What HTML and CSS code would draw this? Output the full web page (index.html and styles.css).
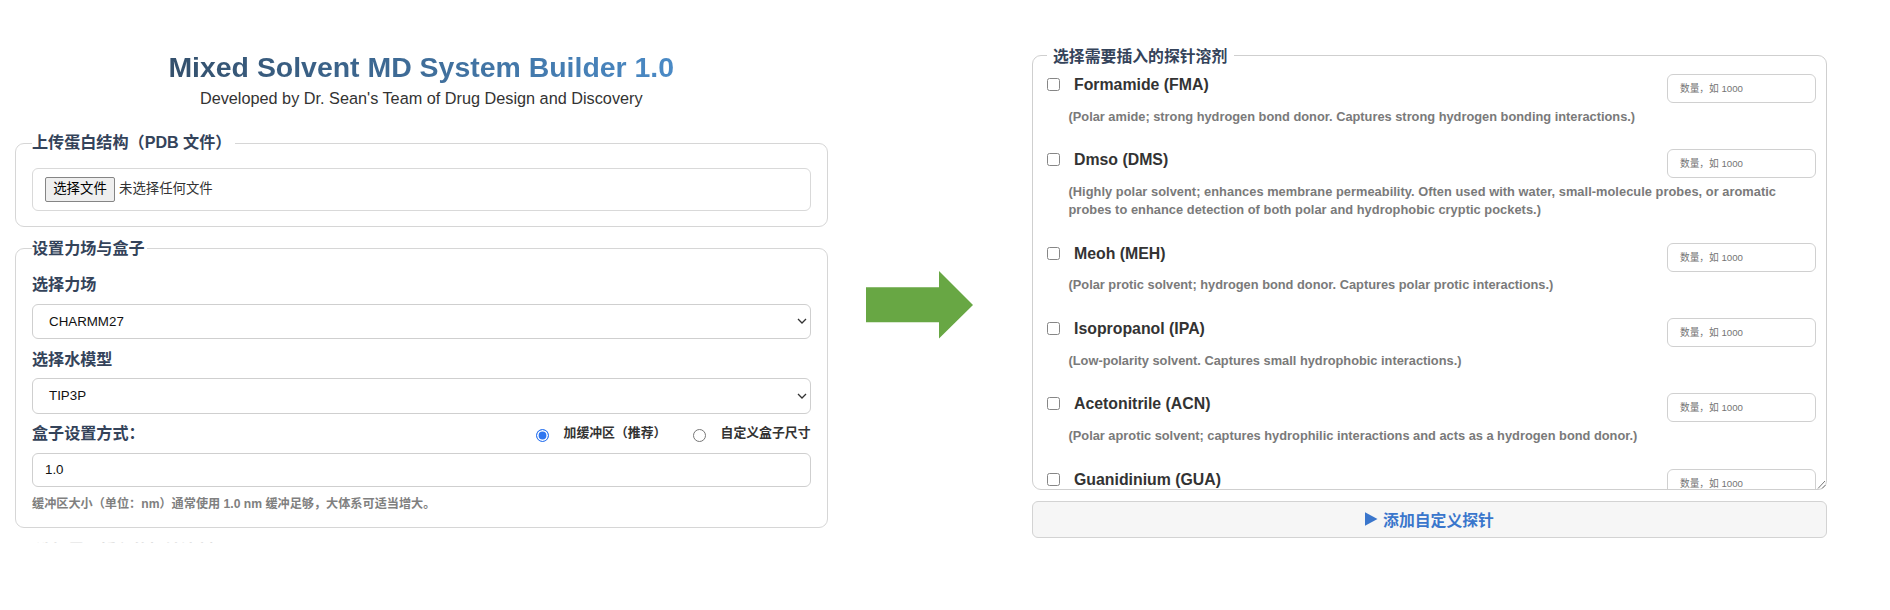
FILE: index.html
```html
<!DOCTYPE html>
<html lang="zh-CN">
<head>
<meta charset="utf-8">
<title>Mixed Solvent MD System Builder 1.0</title>
<link rel="stylesheet" href="styles.css">
</head>
<body>
<main class="page">
  <section class="setup">
    <header class="header">
      <h1 class="title"><span class="title-text">Mixed Solvent MD System Builder 1.0</span></h1>
      <p class="subtitle">Developed by Dr. Sean's Team of Drug Design and Discovery</p>
    </header>

    <div class="panel panel-upload">
      <h2 class="legend legend-upload">上传蛋白结构（PDB 文件）</h2>
      <div class="file-field">
        <button class="file-button" type="button">选择文件</button>
        <span class="file-name">未选择任何文件</span>
      </div>
    </div>

    <div class="panel panel-box">
      <h2 class="legend">设置力场与盒子</h2>
      <div class="label">选择力场</div>
      <div class="select"><span>CHARMM27</span><svg class="chevron" viewBox="0 0 10 6"><path d="M1 1l4 4 4-4"/></svg></div>
      <div class="label label-water">选择水模型</div>
      <div class="select select-water"><span>TIP3P</span><svg class="chevron" viewBox="0 0 10 6"><path d="M1 1l4 4 4-4"/></svg></div>
      <div class="mode">
        <div class="label">盒子设置方式：</div>
        <div class="options">
          <span class="radio radio-on"></span><span class="option option-first">加缓冲区（推荐）</span>
          <span class="radio"></span><span class="option">自定义盒子尺寸</span>
        </div>
      </div>
      <div class="input">1.0</div>
      <p class="hint">缓冲区大小（单位：nm）通常使用 1.0 nm 缓冲足够，大体系可适当增大。</p>
    </div>
    <div class="next-panel">选择需要插入的探针溶剂</div>
  </section>

  <svg class="arrow" viewBox="0 0 108 68"><path d="M0 16.3H73V0L107 34 73 67.6V51.3H0z"/></svg>

  <section class="probes">
    <div class="probe-panel">
      <h2 class="legend legend-probes">选择需要插入的探针溶剂</h2>
      <div class="probe-list">
        <div class="probe"><span class="check"></span><span class="name">Formamide (FMA)</span><span class="amount">数量，如 1000</span><p class="desc">(Polar amide; strong hydrogen bond donor. Captures strong hydrogen bonding interactions.)</p></div>
        <div class="probe"><span class="check"></span><span class="name">Dmso (DMS)</span><span class="amount">数量，如 1000</span><p class="desc desc-long">(Highly polar solvent; enhances membrane permeability. Often used with water, small-molecule probes, or aromatic<br>probes to enhance detection of both polar and hydrophobic cryptic pockets.)</p></div>
        <div class="probe"><span class="check"></span><span class="name">Meoh (MEH)</span><span class="amount">数量，如 1000</span><p class="desc">(Polar protic solvent; hydrogen bond donor. Captures polar protic interactions.)</p></div>
        <div class="probe"><span class="check"></span><span class="name">Isopropanol (IPA)</span><span class="amount">数量，如 1000</span><p class="desc">(Low-polarity solvent. Captures small hydrophobic interactions.)</p></div>
        <div class="probe"><span class="check"></span><span class="name">Acetonitrile (ACN)</span><span class="amount">数量，如 1000</span><p class="desc">(Polar aprotic solvent; captures hydrophilic interactions and acts as a hydrogen bond donor.)</p></div>
        <div class="probe"><span class="check"></span><span class="name">Guanidinium (GUA)</span><span class="amount">数量，如 1000</span></div>
      </div>
      <svg class="grip" viewBox="0 0 9 9"><path d="M1 8.5L8 1M5 8.5L8.5 5"/></svg>
    </div>
    <button class="add" type="button"><svg class="play" viewBox="0 0 13 14"><path d="M0 .3L12.5 7 0 13.7z"/></svg>添加自定义探针</button>
  </section>
</main>
</body>
</html>
```
FILE: styles.css
```css
* { box-sizing: border-box; margin: 0; padding: 0; }

body {
  width: 1890px;
  height: 610px;
  overflow: hidden;
  background: #fff;
  color: #333;
  font-family: "Liberation Sans", "Noto Sans CJK SC", sans-serif;
}

.page { display: flex; align-items: flex-start; height: 610px; padding-left: 15px; }

/* left column */
.setup { width: 812.5px; height: 543px; overflow: hidden; }
.header { height: 143px; padding-top: 50px; text-align: center; }
.title { font-size: 28.45px; line-height: 34px; font-weight: 700; white-space: nowrap; }
.title-text {
  background: linear-gradient(90deg, #34506c, #4a8ac6);
  -webkit-background-clip: text;
  background-clip: text;
  color: transparent;
}
.subtitle { font-size: 16.26px; line-height: 29px; }

.panel { border: 1px solid #d6d6d6; border-radius: 9px; padding: 0 16px; }
.panel-upload { height: 84px; margin-bottom: 21px; }
.panel-box { height: 280px; }

.legend {
  width: max-content;
  height: 24px;
  margin-top: -13px;
  padding-right: 2px;
  background: #fff;
  color: #34435a;
  font-size: 16.1px;
  line-height: 24px;
  font-weight: 600;
  white-space: nowrap;
}
.legend-upload { width: 203px; line-height: 23px; }

.file-field {
  display: flex;
  align-items: center;
  height: 43px;
  margin-top: 13px;
  padding: 0 0 1px 12px;
  border: 1px solid #d9d9d9;
  border-radius: 6px;
  font-size: 13.4px;
}
.file-button {
  width: 70px;
  height: 25px;
  margin-right: 4px;
  border: 1px solid #858585;
  border-radius: 2px;
  background: #efefef;
  color: #000;
  font: inherit;
  line-height: 22px;
}
.file-name { line-height: 20px; }

.label { height: 24px; color: #34435a; font-size: 16.1px; line-height: 24px; font-weight: 600; }
.panel-box > .legend + .label { margin-top: 12px; }
.select {
  display: flex;
  align-items: center;
  justify-content: space-between;
  height: 35px;
  margin-top: 8px;
  padding: 0 3px 1px 16px;
  border: 1px solid #cfcfcf;
  border-radius: 6px;
  color: #111;
  font-size: 13.33px;
}
.chevron { width: 10px; height: 6px; fill: none; stroke: #333; stroke-width: 1.3; }
.label-water { margin-top: 8px; }
.select-water { margin-top: 7px; height: 36px; }
.mode { display: flex; justify-content: space-between; margin-top: 8px; }
.mode .label { line-height: 23px; }
.options { display: flex; align-items: center; font-size: 12.85px; line-height: 22px; font-weight: 600; }
.option { padding-bottom: 2px; }
.radio { width: 13px; height: 13px; margin: 2px 15px 0 0; border: 1px solid #777; border-radius: 50%; }
.radio-on { border-color: #2f76f0; background: #2f76f0; box-shadow: inset 0 0 0 1.6px #fff; }
.option-first { width: 129px; }
.input {
  height: 34px;
  margin-top: 7px;
  padding-left: 12px;
  border: 1px solid #cfcfcf;
  border-radius: 6px;
  color: #111;
  font-size: 13.33px;
  line-height: 32px;
}
.hint { margin-top: 8px; color: #808080; font-size: 12.15px; line-height: 18px; font-weight: 600; white-space: nowrap; }
.next-panel { margin: 10px 0 0 21px; color: #dedede; font-size: 16.1px; line-height: 24px; font-weight: 600; }

.arrow { flex: none; width: 108px; height: 68px; margin: 271px 0 0 38.5px; fill: #68a744; }

/* right column */
.probes { width: 795px; margin: 55px 0 0 58px; }
.probe-panel { position: relative; height: 435px; border: 1px solid #cfcfcf; border-radius: 9px; }
.legend-probes { width: 187px; margin-left: 14px; padding-left: 6px; font-size: 15.85px; line-height: 27px; }
.probe-list { height: 422px; padding: 7px 10px 0 14px; overflow: hidden; }
.probe {
  display: grid;
  grid-template-columns: 27px 1fr 149px;
  grid-template-rows: 33.5px auto;
  padding-bottom: 23.6px;
}
.check { width: 13px; height: 13px; margin-top: 4px; border: 1px solid #868686; border-radius: 2.5px; }
.name { font-size: 15.85px; line-height: 22.5px; font-weight: 700; }
.amount {
  height: 29px;
  padding-left: 12px;
  border: 1px solid #d0d0d0;
  border-radius: 6px;
  color: #757575;
  font-size: 9.7px;
  line-height: 27px;
}
.desc {
  grid-column: 1 / -1;
  padding-left: 21.5px;
  color: #7a7a7a;
  font-size: 12.82px;
  line-height: 18.2px;
  font-weight: 700;
  white-space: nowrap;
}
.desc-long { letter-spacing: 0.045px; }
.grip { position: absolute; right: 0; bottom: 0; width: 9px; height: 9px; fill: none; stroke: #777; stroke-width: 1; }

.add {
  display: flex;
  align-items: center;
  justify-content: center;
  width: 100%;
  height: 37px;
  margin-top: 11px;
  padding-bottom: 1px;
  border: 1px solid #d3d3d3;
  border-radius: 6px;
  background: #f6f6f6;
  color: #3a76cc;
  font: 600 15.85px "Liberation Sans", "Noto Sans CJK SC", sans-serif;
}
.play { width: 13px; height: 14px; margin: 0 5px 1px 0; fill: #3a76cc; }
```
